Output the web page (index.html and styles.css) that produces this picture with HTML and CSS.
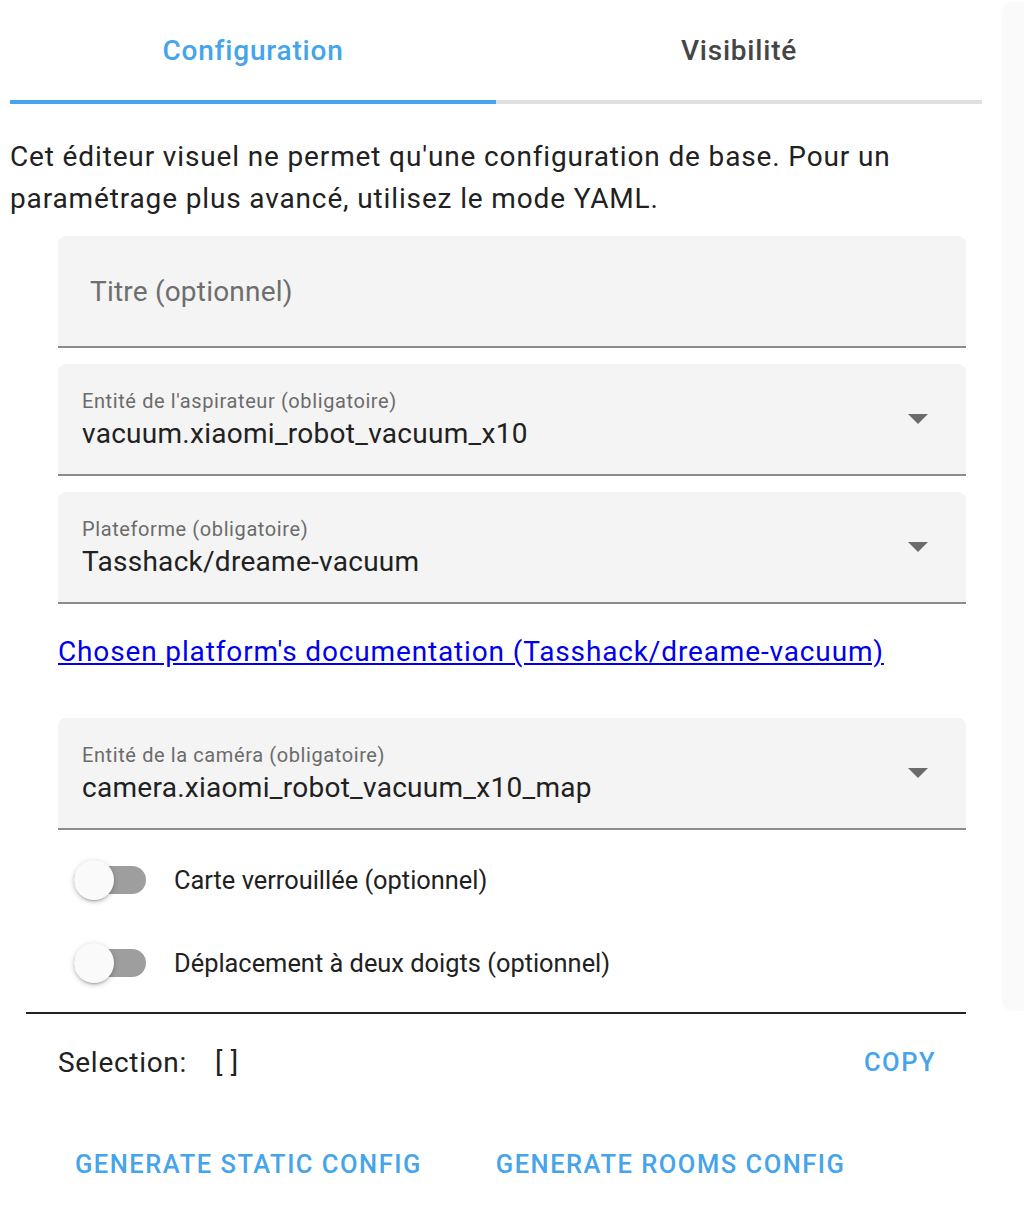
FILE: index.html
```html
<!DOCTYPE html>
<html lang="fr">
<head>
<meta charset="utf-8">
<title>Éditeur de carte</title>
<link rel="stylesheet" href="styles.css">
</head>
<body>
<div class="page">
  <main class="editor">
    <div class="tabs">
      <div class="tab active">Configuration</div>
      <div class="tab">Visibilité</div>
    </div>
    <p class="intro">Cet éditeur visuel ne permet qu'une configuration de base. Pour un paramétrage plus avancé, utilisez le mode YAML.</p>
    <div class="form">
      <div class="field placeholder-field">
        <span class="placeholder">Titre (optionnel)</span>
      </div>
      <div class="field select">
        <div class="field-body">
          <span class="label">Entité de l'aspirateur (obligatoire)</span>
          <span class="value">vacuum.xiaomi_robot_vacuum_x10</span>
        </div>
        <span class="arrow"></span>
      </div>
      <div class="field select">
        <div class="field-body">
          <span class="label">Plateforme (obligatoire)</span>
          <span class="value">Tasshack/dreame-vacuum</span>
        </div>
        <span class="arrow"></span>
      </div>
      <a class="doc-link" href="#">Chosen platform's documentation (Tasshack/dreame-vacuum)</a>
      <div class="field select camera">
        <div class="field-body">
          <span class="label">Entité de la caméra (obligatoire)</span>
          <span class="value">camera.xiaomi_robot_vacuum_x10_map</span>
        </div>
        <span class="arrow"></span>
      </div>
      <div class="toggles">
        <div class="toggle-row">
          <span class="switch"><span class="track"></span><span class="thumb"></span></span>
          <span class="toggle-label">Carte verrouillée (optionnel)</span>
        </div>
        <div class="toggle-row">
          <span class="switch"><span class="track"></span><span class="thumb"></span></span>
          <span class="toggle-label">Déplacement à deux doigts (optionnel)</span>
        </div>
      </div>
    </div>
    <div class="sep"></div>
    <div class="selection-row">
      <span class="sel-label">Selection:</span>
      <span class="sel-value">[ ]</span>
      <button class="text-btn copy">COPY</button>
    </div>
    <div class="actions">
      <button class="text-btn">GENERATE STATIC CONFIG</button>
      <button class="text-btn">GENERATE ROOMS CONFIG</button>
    </div>
  </main>
  <aside class="side"></aside>
</div>
</body>
</html>
```

FILE: styles.css
```css
html, body {
  margin: 0;
  padding: 0;
  background: #ffffff;
}
body {
  width: 1024px;
  height: 1232px;
  overflow: hidden;
  font-family: Roboto, "Liberation Sans", sans-serif;
  color: #212121;
}
.page {
  display: flex;
  align-items: flex-start;
}
.editor {
  margin-left: 10px;
  width: 972px;
  flex: none;
}
.side {
  margin-left: 20px;
  margin-top: 2px;
  width: 40px;
  height: 1009px;
  background: #fafafa;
  border-radius: 10px;
  flex: none;
}

/* tabs */
.tabs {
  display: flex;
}
.tab {
  flex: 1;
  height: 100px;
  display: flex;
  align-items: center;
  justify-content: center;
  font-size: 28px;
  font-weight: 500;
  letter-spacing: 0.8px;
  color: #454545;
  border-bottom: 4px solid #e0e0e0;
}
.tab.active {
  color: #46a4ea;
  border-bottom-color: #46a4ea;
}

.intro {
  margin: 32px 0 0;
  font-size: 28px;
  line-height: 42px;
  letter-spacing: 0.86px;
  color: #212121;
}

/* form */
.form {
  padding: 16px 16px 0 48px;
  display: flex;
  flex-direction: column;
}
.field {
  height: 110px;
  background: #f4f4f4;
  border-radius: 8px 8px 0 0;
  border-bottom: 2px solid #8c8c8c;
  display: flex;
  margin-bottom: 16px;
}
.placeholder-field {
  align-items: center;
  padding-left: 32px;
}
.placeholder {
  font-size: 28px;
  letter-spacing: 0.2px;
  color: #6e6e6e;
}
.field-body {
  flex: 1;
  display: flex;
  flex-direction: column;
  padding: 23px 0 0 24px;
}
.label {
  font-size: 20px;
  line-height: 28px;
  letter-spacing: 0.6px;
  color: #6b6b6b;
}
.value {
  margin-top: 1px;
  font-size: 28px;
  line-height: 36px;
  letter-spacing: 0.28px;
  color: #212121;
}
.arrow {
  align-self: center;
  width: 0;
  height: 0;
  margin-right: 38px;
  border-left: 10px solid transparent;
  border-right: 10px solid transparent;
  border-top: 10px solid #6b6b6b;
}
.doc-link {
  margin-top: 11px;
  font-size: 28px;
  line-height: 42px;
  letter-spacing: 0.86px;
  color: #0000ee;
  text-decoration: underline;
  align-self: flex-start;
}
.field.camera {
  margin-top: 45px;
  margin-bottom: 0;
}

/* toggles */
.toggles {
  padding-top: 8px;
}
.toggle-row {
  height: 83px;
  display: flex;
  align-items: center;
  padding-left: 16px;
}
.switch {
  position: relative;
  width: 72px;
  height: 40px;
  flex: none;
}
.track {
  position: absolute;
  left: 0;
  top: 6px;
  width: 72px;
  height: 28px;
  border-radius: 14px;
  background: #9e9e9e;
}
.thumb {
  position: absolute;
  left: 0;
  top: 0;
  width: 40px;
  height: 40px;
  border-radius: 50%;
  background: #fafafa;
  box-shadow: 0 3px 2px -2px rgba(0,0,0,0.2), 0 2px 4px 0 rgba(0,0,0,0.14), 0 1px 6px 0 rgba(0,0,0,0.12);
}
.toggle-label {
  margin-left: 28px;
  font-size: 25.4px;
  color: #212121;
}

.sep {
  margin: 8px 16px 0;
  height: 2px;
  background: #222222;
}

.selection-row {
  margin-top: 20px;
  height: 56px;
  display: flex;
  align-items: center;
  padding: 0 46px 0 48px;
  font-size: 28px;
  letter-spacing: 0.7px;
}
.sel-value {
  margin-left: 28px;
}
.text-btn {
  background: none;
  border: none;
  padding: 0;
  font-family: Roboto, "Liberation Sans", sans-serif;
  font-size: 25.5px;
  font-weight: 500;
  letter-spacing: 1.5px;
  color: #46a4ea;
  cursor: pointer;
}
.copy {
  margin-left: auto;
}
.actions {
  margin-top: 38px;
  height: 72px;
  display: flex;
  align-items: center;
  padding-left: 65px;
  gap: 74px;
}
```
